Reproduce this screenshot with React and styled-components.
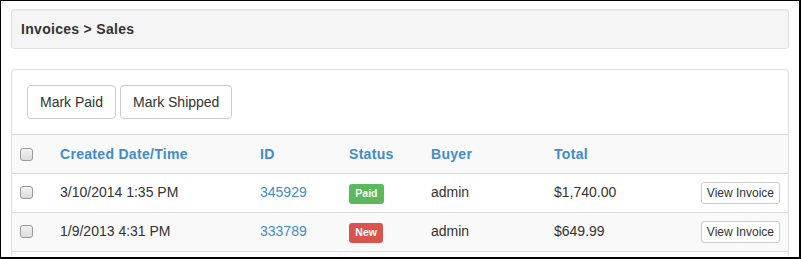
import React from 'react';
import styled, { createGlobalStyle } from 'styled-components';

const GlobalStyle = createGlobalStyle`
  html, body {
    margin: 0;
    padding: 0;
    background: #fff;
  }
  body {
    font-family: "Liberation Sans", Arial, Helvetica, sans-serif;
    font-size: 14px;
    line-height: 20px;
    color: #333;
  }
  * {
    box-sizing: border-box;
  }
`;

// Screenshot frame around the page
const Frame = styled.div`
  width: 801px;
  height: 259px;
  border-style: solid;
  border-color: #000;
  border-width: 1px 2px 2px 1px;
  padding: 8px 10px 0 10px;
  overflow: hidden;
  background: #fff;
`;

const Well = styled.div`
  background: #f5f5f5;
  border: 1px solid #e3e3e3;
  border-radius: 3px;
  padding: 9px;
  margin-bottom: 20px;
  box-shadow: inset 0 1px 1px rgba(0, 0, 0, 0.05);
`;

const Crumb = styled.span`
  font-weight: bold;
  letter-spacing: 0.3px;
  color: #333;
`;

const Panel = styled.div`
  border: 1px solid #ddd;
  border-radius: 4px;
  background: #fff;
  padding-bottom: 20px;
`;

const PanelBody = styled.div`
  padding: 15px;
  display: flex;
  gap: 4px;
`;

const Button = styled.button`
  font-family: inherit;
  font-size: ${p => (p.small ? '12px' : '14px')};
  line-height: ${p => (p.small ? '18px' : '20px')};
  padding: ${p => (p.small ? '1px 5px' : '6px 12px')};
  height: ${p => (p.small ? '22px' : '34px')};
  color: #333;
  background: #fff;
  border: 1px solid #ccc;
  border-radius: ${p => (p.small ? '3px' : '4px')};
  cursor: pointer;
  white-space: nowrap;
`;

const Table = styled.table`
  width: 100%;
  border-collapse: collapse;
  table-layout: fixed;
`;

const Row = styled.tr`
  background: ${p => (p.shaded ? '#f9f9f9' : '#fff')};
`;

const HeadCell = styled.th`
  text-align: left;
  font-weight: bold;
  letter-spacing: 0.3px;
  color: #428bca;
  padding: 9px 8px;
  border-top: 1px solid #ddd;
  vertical-align: top;
`;

const Cell = styled.td`
  padding: 8px;
  border-top: 1px solid #ddd;
  vertical-align: top;
  text-align: ${p => p.align || 'left'};
  white-space: nowrap;
`;

const Check = styled.input.attrs({ type: 'checkbox' })`
  appearance: none;
  -webkit-appearance: none;
  display: block;
  width: 13px;
  height: 13px;
  margin: 4px 0 0 0;
  border: 1px solid #9a9a9a;
  border-radius: 3px;
  background: linear-gradient(#f2f2f2, #dcdcdc);
`;

const Link = styled.a`
  color: #428bca;
  text-decoration: none;
`;

const Label = styled.span`
  display: inline-block;
  font-size: 10.5px;
  font-weight: bold;
  line-height: 1.4;
  padding: 0.2em 0.6em 0.3em;
  color: #fff;
  border-radius: 3px;
  background: ${p => p.color};
  vertical-align: 0;
`;

const invoices = [
  { date: '3/10/2014 1:35 PM', id: '345929', status: 'Paid', buyer: 'admin', total: '$1,740.00' },
  { date: '1/9/2013 4:31 PM', id: '333789', status: 'New', buyer: 'admin', total: '$649.99' },
];

const statusColors = {
  Paid: '#5cb85c',
  New: '#d9534f',
};

const App = () => (
  <>
    <GlobalStyle />
    <Frame>
      <Well>
        <Crumb>Invoices &gt; Sales</Crumb>
      </Well>
      <Panel>
        <PanelBody>
          <Button>Mark Paid</Button>
          <Button>Mark Shipped</Button>
        </PanelBody>
        <Table>
          <colgroup>
            <col style={{ width: 40 }} />
            <col style={{ width: 200 }} />
            <col style={{ width: 89 }} />
            <col style={{ width: 82 }} />
            <col style={{ width: 123 }} />
            <col />
          </colgroup>
          <tbody>
            <Row shaded>
              <HeadCell><Check /></HeadCell>
              <HeadCell>Created Date/Time</HeadCell>
              <HeadCell>ID</HeadCell>
              <HeadCell>Status</HeadCell>
              <HeadCell>Buyer</HeadCell>
              <HeadCell>Total</HeadCell>
              <HeadCell />
            </Row>
            {invoices.map((inv, i) => (
              <Row key={inv.id} shaded={i % 2 === 1}>
                <Cell><Check /></Cell>
                <Cell>{inv.date}</Cell>
                <Cell><Link href="#">{inv.id}</Link></Cell>
                <Cell><Label color={statusColors[inv.status]}>{inv.status}</Label></Cell>
                <Cell>{inv.buyer}</Cell>
                <Cell>{inv.total}</Cell>
                <Cell align="right"><Button small>View Invoice</Button></Cell>
              </Row>
            ))}
            <Row>
              <Cell colSpan={7} />
            </Row>
          </tbody>
        </Table>
      </Panel>
    </Frame>
  </>
);

export default App;
